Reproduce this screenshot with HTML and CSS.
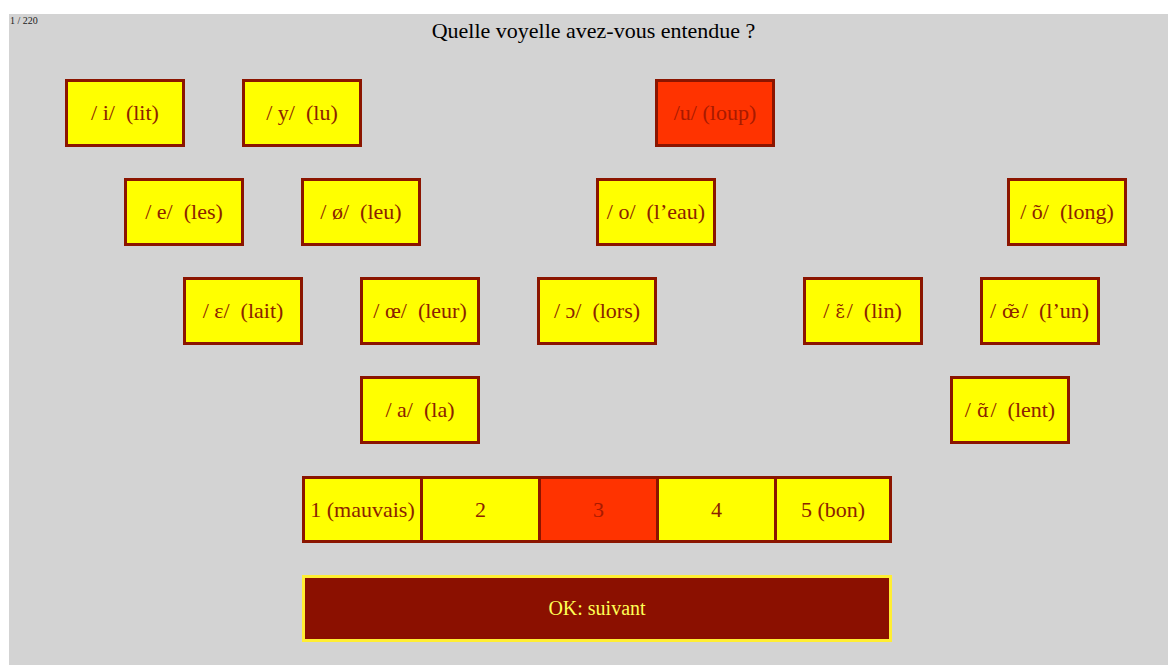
FILE: index.html
```html
<!DOCTYPE html>
<html lang="fr">
<head>
    <meta charset="UTF-8">
    <meta name="viewport" content="width=device-width, initial-scale=1.0">
    <title>Voyelles</title>
    <link rel="stylesheet" href="styles.css">
</head>
<body>
    <div class="page">
        <div class="header">
            <span class="counter">1 / 220</span>
            <h1 class="question">Quelle voyelle avez-vous entendue ?</h1>
            <span></span>
        </div>

        <div class="chart">
            <!-- row 1 -->
            <div class="vowel r1 c1">/ i/&nbsp; (lit)</div>
            <div class="vowel r1 c7">/ y/&nbsp; (lu)</div>
            <div class="vowel r1 c21 selected">/u/ (loup)</div>
            <!-- row 2 -->
            <div class="vowel r2 c3">/ e/&nbsp; (les)</div>
            <div class="vowel r2 c9">/ ø/&nbsp; (leu)</div>
            <div class="vowel r2 c19">/ o/&nbsp; (l’eau)</div>
            <div class="vowel r2 c33">/ õ/&nbsp; (long)</div>
            <!-- row 3 -->
            <div class="vowel r3 c5">/ ɛ/&nbsp; (lait)</div>
            <div class="vowel r3 c11">/ œ/&nbsp; (leur)</div>
            <div class="vowel r3 c17">/ ɔ/&nbsp; (lors)</div>
            <div class="vowel r3 c26">/<span class="ipa">ɛ̃</span>/&nbsp; (lin)</div>
            <div class="vowel r3 c32">/<span class="ipa">œ̃</span>/&nbsp; (l’un)</div>
            <!-- row 4 -->
            <div class="vowel r4 c11">/ a/&nbsp; (la)</div>
            <div class="vowel r4 c31">/<span class="ipa">ɑ̃</span>/&nbsp; (lent)</div>
        </div>

        <div class="rating">
            <div class="score">1 (mauvais)</div>
            <div class="score">2</div>
            <div class="score selected">3</div>
            <div class="score">4</div>
            <div class="score">5 (bon)</div>
        </div>

        <button type="button" class="next">OK: suivant</button>
    </div>
</body>
</html>
```

FILE: styles.css
```css
html, body {
    margin: 0;
    background: #ffffff;
}
body, button {
    font-family: "Liberation Serif", "DejaVu Serif", serif;
}
.page {
    margin: 14px 0 0 9px;
    height: 651px;
    background-color: #d3d3d3;
    overflow: hidden;
}
.header {
    display: grid;
    grid-template-columns: 1fr auto 1fr;
    height: 34px;
}
.counter {
    font-size: 10px;
    color: #222;
    padding: 1px 0 0 1px;
}
.question {
    margin: 4px 0 0 10px;
    font-size: 22px;
    font-weight: normal;
    color: #000;
}
.chart {
    display: grid;
    grid-template-columns: repeat(36, 29.5px);
    grid-auto-rows: 68px;
    row-gap: 31px;
    margin: 31px 0 0 56px;
}
.vowel, .score {
    box-sizing: border-box;
    display: flex;
    align-items: center;
    justify-content: center;
    background-color: #ffff00;
    color: #8b2200;
    font-size: 22px;
    white-space: nowrap;
}
.ipa {
    font-family: "DejaVu Serif", serif;
    font-size: 18px;
    margin: 0 2px 0 6px;
}
.vowel {
    width: 120px;
    height: 68px;
    border: 3px solid #8b1500;
}
.selected {
    background-color: #ff3300;
    color: #a81a00;
}
.r1 { grid-row: 1; }
.r2 { grid-row: 2; }
.r3 { grid-row: 3; }
.r4 { grid-row: 4; }
.c1 { grid-column: 1 / span 4; }
.c3 { grid-column: 3 / span 4; }
.c5 { grid-column: 5 / span 4; }
.c7 { grid-column: 7 / span 4; }
.c9 { grid-column: 9 / span 4; }
.c11 { grid-column: 11 / span 4; }
.c17 { grid-column: 17 / span 4; }
.c19 { grid-column: 19 / span 4; }
.c21 { grid-column: 21 / span 4; }
.c26 { grid-column: 26 / span 4; }
.c31 { grid-column: 31 / span 4; }
.c32 { grid-column: 32 / span 4; }
.c33 { grid-column: 33 / span 4; margin-left: -2px; }
.rating {
    display: flex;
    margin: 32px 0 0 293px;
}
.score {
    width: 118px;
    height: 67px;
    border: 3px solid #8b1500;
    border-right: none;
}
.score:last-child {
    border-right: 3px solid #8b1500;
}
.next {
    display: block;
    box-sizing: border-box;
    width: 590px;
    height: 67px;
    margin: 32px 0 0 293px;
    background-color: #8b1000;
    border: 3px solid #ffee33;
    color: #ffff55;
    font-size: 20px;
}
```
